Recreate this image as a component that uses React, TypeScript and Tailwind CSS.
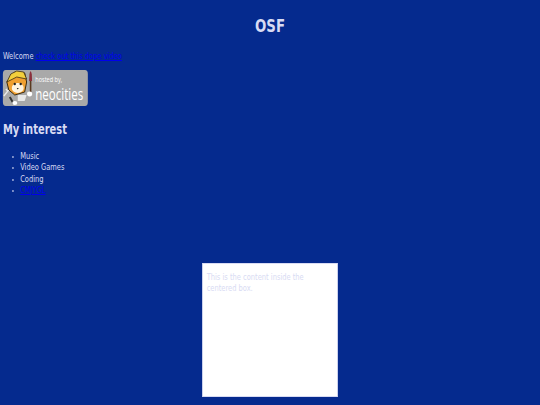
export default function App() {
  const font = { fontFamily: '"DejaVu Sans", sans-serif' };

  return (
    <div className="h-[405px] w-[540px] overflow-hidden bg-[#052a8e]">
      {/* the whole page is squeezed sideways in the reference */}
      <div className="h-[405px] w-[750px] origin-top-left scale-x-[.72] text-[#d8dbf3]" style={font}>
        <h1 className="pt-[15px] text-center text-[18.5px] font-bold leading-[22px]">OSF</h1>

        <p className="mt-[13px] pl-[4px] text-[9.3px] leading-[12px]">
          Welcome{" "}
          <a href="#" className="text-[#0000ee] underline">
            check out this dope video
          </a>
        </p>

        {/* Neocities badge */}
        <div className="ml-[4px] mt-[8px] flex h-[36px] w-[118px] items-center rounded-[4px] bg-[#a9a9a9]">
          <svg viewBox="0 0 32 36" preserveAspectRatio="none" className="h-[36px] w-[44px] shrink-0">
            <path d="M1 26 L5 21 M5 21 L3 19 M5 21 L7 19" stroke="#e8e8e8" strokeWidth="1.4" fill="none" />
            <path d="M7 27 L11 34" stroke="#333" strokeWidth="2" />
            <ellipse cx="12" cy="33" rx="2.6" ry="2" fill="#fff" />
            <path d="M7 8 L12 2 L22 3 L24 12 L22 22 L12 25 L6 20 L4 12 Z" fill="#f0a030" stroke="#3a2a10" strokeWidth="1" />
            <path d="M4 12 L8 4 L14 1 L21 2 L24 9 L14 7 Z" fill="#f3cf3c" stroke="#3a2a10" strokeWidth="0.8" />
            <ellipse cx="15" cy="18" rx="6" ry="5" fill="#fff4e0" />
            <circle cx="12" cy="14" r="1.2" fill="#222" />
            <circle cx="18" cy="14" r="1.2" fill="#222" />
            <path d="M14 18 L16 18 L15 19.5 Z" fill="#222" />
            <path d="M28 4 L28 24" stroke="#5a3a20" strokeWidth="1.6" />
            <path d="M26.5 11 L29.5 11 L29 3 L28 1 L27 3 Z" fill="#8c2f3c" />
            <ellipse cx="27" cy="24" rx="2.6" ry="2.4" fill="#fff" />
            <path d="M15 25 L24 25 L22 31 L15 31 Z" fill="#e8e8e8" />
          </svg>
          <div className="ml-[1px] flex flex-col text-white" style={{ fontFamily: '"Open Sans", sans-serif' }}>
            <span className="text-[7.7px] leading-[11px]">hosted by,</span>
            <span className="text-[16px] leading-[18px]">neocities</span>
          </div>
        </div>

        <h2 className="mt-[14px] pl-[4px] text-[13.8px] font-bold leading-[18px]">My interest</h2>

        <ul className="mt-[12px] list-disc pl-[28px] text-[9.3px] leading-[11.4px] marker:text-[7px]">
          <li>Music</li>
          <li>Video Games</li>
          <li>Coding</li>
          <li>
            <a href="#" className="text-[#0000ee] underline">
              CMJYGL
            </a>
          </li>
        </ul>

        <div className="mx-auto mt-[67px] h-[134px] w-[188px] border border-[#d8dbf3] bg-white px-[5px] py-[7px] text-[9.3px] leading-[11.5px]">
          This is the content inside the centered box.
        </div>
      </div>
    </div>
  );
}
